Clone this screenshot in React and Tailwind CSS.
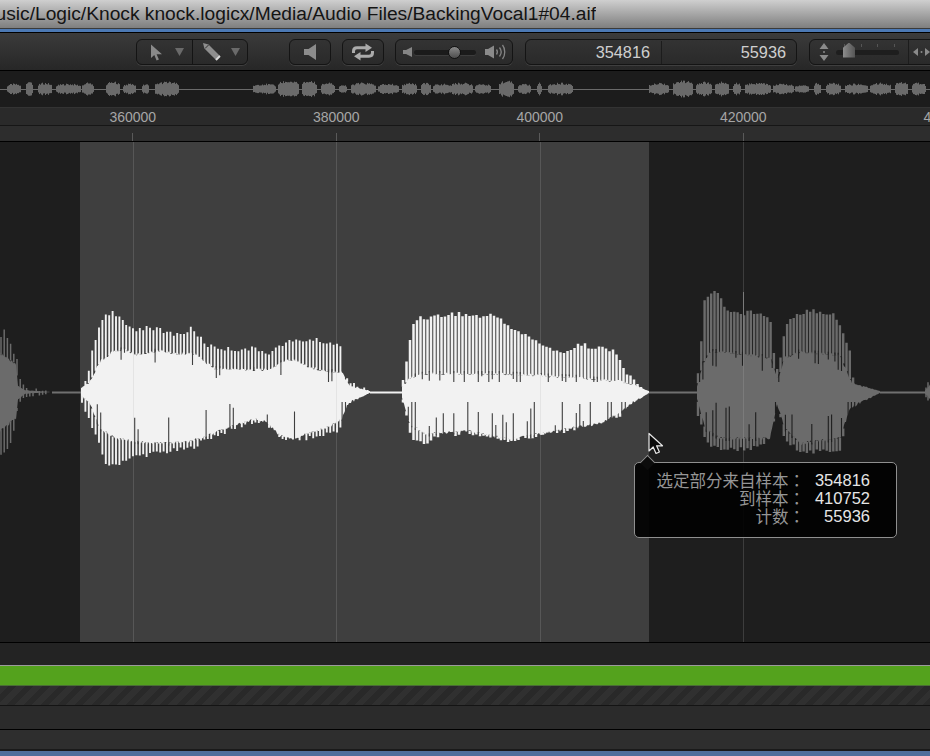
const rnd = (i) => {
  const v = Math.sin(i * 12.9898) * 43758.5453;
  return v - Math.floor(v);
};

const lerp = (pts, x) => {
  if (x <= pts[0][0]) return pts[0][1];
  for (let i = 1; i < pts.length; i++) {
    if (x <= pts[i][0]) {
      const [a, b] = pts[i - 1];
      const [c, d] = pts[i];
      return b + ((d - b) * (x - a)) / (c - a);
    }
  }
  return pts[pts.length - 1][1];
};

// envelopes are in page coordinates, the waveform centre is y=392
const waves = [
  {
    id: 0, from: 0, to: 52, fill: '#6b6b6b', bg: '#1e1e1e', step: 3.2, w: 1.5, cuts: 0.15, deep: 14,
    top: [[0, 335], [3, 327], [10, 340], [15, 355], [17, 356], [18, 375], [25, 385], [50, 391], [52, 391]],
    solidTop: [[0, 352], [16, 362], [18, 385], [25, 390], [52, 392]],
    solidBot: [[0, 432], [16, 420], [18, 400], [25, 394], [52, 392]],
    bot: [[0, 455], [5, 457], [13, 440], [16, 422], [18, 405], [25, 398], [50, 394], [52, 393]],
  },
  {
    id: 1, from: 81, to: 370, fill: '#f2f2f2', bg: '#3f3f3f', step: 3.4, w: 1.9, cuts: 0.14, deep: 26,
    top: [[81, 390], [88, 375], [93, 343], [100, 323], [105, 311], [113, 310], [125, 322], [135, 327], [150, 324], [165, 330], [180, 332], [192, 326], [200, 335], [208, 343], [230, 347], [250, 346], [270, 350], [285, 340], [310, 337], [330, 340], [342, 345], [344, 375], [350, 378], [360, 385], [370, 391]],
    solidTop: [[81, 388], [90, 380], [100, 360], [115, 349], [125, 348], [135, 353], [160, 349], [175, 352], [195, 352], [205, 360], [215, 367], [250, 368], [270, 368], [285, 359], [295, 358], [310, 366], [330, 370], [342, 370], [350, 385], [370, 391]],
    solidBot: [[81, 396], [90, 405], [100, 430], [115, 440], [130, 442], [150, 445], [165, 445], [190, 443], [200, 440], [220, 432], [240, 425], [255, 421], [265, 423], [280, 437], [292, 441], [305, 436], [330, 428], [342, 420], [348, 405], [370, 393]],
    bot: [[81, 400], [90, 425], [100, 450], [105, 465], [113, 469], [125, 462], [140, 458], [160, 455], [190, 451], [210, 440], [250, 425], [265, 425], [280, 440], [292, 442], [315, 440], [340, 432], [345, 405], [360, 395], [370, 392]],
  },
  {
    id: 2, from: 402, to: 649, fill: '#f2f2f2', bg: '#3f3f3f', step: 3.5, w: 2.5, cuts: 0.45, deep: 30,
    top: [[402, 385], [408, 350], [413, 320], [420, 315], [435, 314], [455, 311], [480, 314], [497, 313], [505, 320], [515, 328], [530, 335], [545, 343], [552, 349], [570, 348], [577, 342], [600, 345], [615, 350], [622, 357], [625, 370], [630, 375], [640, 383], [649, 391]],
    solidTop: [[402, 386], [410, 376], [425, 372], [500, 372], [540, 374], [580, 376], [620, 380], [630, 382], [649, 391]],
    solidBot: [[402, 398], [410, 425], [425, 436], [440, 434], [470, 433], [510, 441], [530, 437], [570, 430], [600, 425], [620, 414], [630, 406], [649, 393]],
    bot: [[402, 400], [408, 425], [413, 445], [425, 446], [440, 436], [470, 436], [510, 443], [530, 440], [570, 432], [600, 425], [622, 418], [626, 405], [649, 393]],
  },
  {
    id: 3, from: 697, to: 880, fill: '#6b6b6b', bg: '#1e1e1e', step: 3.3, w: 2.4, cuts: 0.45, deep: 30,
    top: [[697, 375], [700, 365], [703, 300], [712, 289], [720, 292], [727, 308], [740, 311], [760, 309], [770, 315], [775, 360], [778, 370], [785, 325], [790, 315], [810, 307], [835, 312], [843, 330], [850, 350], [852, 375], [860, 385], [875, 390], [880, 391]],
    solidTop: [[697, 385], [703, 362], [710, 350], [720, 350], [770, 356], [778, 378], [785, 356], [800, 350], [840, 354], [852, 382], [880, 391]],
    solidBot: [[697, 400], [705, 430], [720, 440], [770, 440], [777, 405], [785, 430], [800, 445], [840, 440], [850, 410], [880, 393]],
    bot: [[697, 415], [705, 440], [712, 450], [730, 452], [760, 450], [770, 440], [778, 405], [785, 445], [800, 452], [812, 455], [840, 452], [848, 415], [852, 400], [860, 395], [880, 392]],
  },
  {
    id: 4, from: 925, to: 930, fill: '#6b6b6b', bg: '#1e1e1e', step: 2, w: 1.5, cuts: 0, deep: 0,
    top: [[925, 388], [927, 380], [930, 378]],
    solidTop: [[925, 390], [930, 384]],
    solidBot: [[925, 394], [930, 400]],
    bot: [[925, 396], [927, 404], [930, 405]],
  },
];

const buildWave = (wave) => {
  let solid = '';
  let spikes = '';
  let cuts = '';
  const xs = [];
  for (let x = wave.from; x <= wave.to; x += 1) xs.push(x);
  // a little noise so the solid body has a rough edge
  const amp = (y) => Math.min(1, Math.abs(y - 392) / 12) * 3;
  solid += xs.map((x, n) => {
    const y = lerp(wave.solidTop, x);
    return `${n ? 'L' : 'M'}${x} ${(y + rnd(x + wave.id) * amp(y)).toFixed(1)}`;
  }).join('');
  solid += xs.slice().reverse().map((x) => {
    const y = lerp(wave.solidBot, x);
    return `L${x} ${(y - rnd(x * 3 + wave.id) * amp(y)).toFixed(1)}`;
  }).join('') + 'Z';
  let i = wave.id * 100;
  for (let x = wave.from + 1; x < wave.to; x += wave.step) {
    i += 1;
    const t = lerp(wave.top, x) + rnd(i) * 5;
    const st = lerp(wave.solidTop, x);
    const sb = lerp(wave.solidBot, x);
    const b = lerp(wave.bot, x) - rnd(i + 50) * 5;
    if (t < st) spikes += `M${x.toFixed(1)} ${t.toFixed(1)}V${(st + 2).toFixed(1)}`;
    if (b > sb) spikes += `M${x.toFixed(1)} ${(sb - 2).toFixed(1)}V${b.toFixed(1)}`;
    if (rnd(i + 7) < wave.cuts) {
      const cx = x + wave.step / 2;
      const cb = lerp(wave.solidBot, cx);
      if (cb - 392 > 14) cuts += `M${cx.toFixed(1)} ${(cb + 1).toFixed(1)}V${Math.max(402, cb - 6 - rnd(i + 9) * wave.deep).toFixed(1)}`;
    }
    if (rnd(i + 11) < wave.cuts) {
      const cx = x + wave.step / 2;
      const ct = lerp(wave.solidTop, cx);
      if (392 - ct > 14) cuts += `M${cx.toFixed(1)} ${(ct - 1).toFixed(1)}V${Math.min(382, ct + rnd(i + 13) * wave.deep * 0.6).toFixed(1)}`;
    }
  }
  return { ...wave, solid, spikes, cuts };
};

const builtWaves = waves.map(buildWave);

const overviewBlobs = [
  [7, 20, 5], [26, 32, 8], [38, 51, 6], [56, 80, 5], [82, 93, 6], [106, 119, 7], [123, 135, 5], [142, 148, 5], [155, 178, 7],
  [253, 275, 5], [278, 298, 8], [302, 316, 8], [321, 334, 6], [339, 346, 4], [351, 375, 6], [378, 398, 5], [402, 416, 6], [421, 430, 6],
  [433, 450, 5], [450, 472, 6], [475, 490, 5], [499, 513, 8], [518, 530, 5], [537, 541, 6], [548, 572, 6],
  [649, 668, 6], [673, 692, 8], [696, 711, 7], [715, 728, 7], [733, 740, 6], [745, 770, 6], [773, 793, 5], [795, 808, 4], [814, 820, 6], [826, 840, 6], [845, 867, 5], [870, 890, 6], [895, 907, 7], [912, 925, 6],
];

const overviewPath = overviewBlobs
  .map(([a, b, h], n) => {
    let d = '';
    for (let x = a; x <= b; x += 1) {
      const p = (x - a) / (b - a || 1);
      const shape = Math.pow(Math.sin(Math.PI * Math.min(1, p * 0.84 + 0.08)), 0.3);
      const hh = Math.max(1, h * shape * (0.72 + rnd(n * 40 + x) * 0.38));
      d += `M${x + 0.5} ${(18 - hh).toFixed(1)}V${(18 + hh).toFixed(1)}`;
    }
    return d;
  })
  .join('');

const gridX = [133, 336, 540, 743];

function Waveform() {
  return (
    <svg className="absolute inset-0 w-[930px] h-[500px]" viewBox="0 142 930 500" fill="none">
      {gridX.map((x) => (
        <path key={x} d={`M${x + 0.5} 142V642`} stroke={x < 648 ? '#575757' : '#3d3d3d'} />
      ))}
      <path d="M52 392.5H81M648 392.5H697M880 392.5H925" stroke="#707070" strokeWidth="2" />
      <path d="M370 392.5H402" stroke="#f2f2f2" strokeWidth="2" />
      {builtWaves.map((w) => (
        <g key={w.id}>
          <path d={w.solid} fill={w.fill} />
          <path d={w.spikes} stroke={w.fill} strokeWidth={w.w} />
          <path d={w.cuts} stroke={w.bg} strokeWidth="1.1" />
        </g>
      ))}
      <path d="M133.5 350V440M336.5 370V428M540.5 374V434" stroke="#e4e4e4" />
      <path d="M743.5 292V450" stroke="#7b7b7b" />
    </svg>
  );
}

function Cursor() {
  return (
    <svg className="absolute left-[646px] top-[290px] w-[20px] h-[26px]" viewBox="0 0 20 26">
      <path d="M3 1.5V19l4.2-4 2.8 6.5 3.4-1.5-2.8-6.2H16.5Z" fill="#0a0a0a" stroke="#e8e8e8" strokeWidth="1.2" strokeLinejoin="round" />
    </svg>
  );
}

const Colon = () => <span className="font-['Noto_Sans_CJK_TC',sans-serif]">：</span>;

const tipLabel = 'h-[18px] overflow-hidden text-[#969696]';
const tipValue = 'h-[18px] text-[#e6e6e6]';

function Tooltip() {
  return (
    <div className="absolute left-[634px] top-[320px] w-[263px] h-[76px] rounded-[5px] border border-[#8f8f8f] bg-black/90 pt-[8px] pr-[26px] text-[16.5px] leading-[18px]">
      <div className="absolute left-[7px] top-[-6px] w-[11px] h-[11px] rotate-45 border-l border-t border-[#8f8f8f] bg-[#0c0c0c]" />
      <div className="relative grid grid-cols-[1fr_65px] text-right whitespace-nowrap">
        <span className={tipLabel}>选定部分来自样本<Colon /></span>
        <span className={tipValue}>354816</span>
        <span className={tipLabel}>到样本<Colon /></span>
        <span className={tipValue}>410752</span>
        <span className={tipLabel}>计数<Colon /></span>
        <span className={tipValue}>55936</span>
      </div>
    </div>
  );
}

const Caret = () => (
  <svg width="9" height="8" viewBox="0 0 9 8"><path d="M0 0h9L4.5 8Z" fill="#6a6a6a" /></svg>
);

const ctrl = 'h-[26px] rounded-[6px] border border-[#141414] bg-gradient-to-b from-[#333333] to-[#2a2a2a] shadow-[0_1px_0_#3f3f3f] flex items-center shrink-0';

function Toolbar() {
  return (
    <div className="h-[37px] pl-[136px] pt-[6px] flex items-start bg-gradient-to-b from-[#3b3b3b] to-[#272727] overflow-hidden">
      <div className={`${ctrl} w-[112px]`}>
        <div className="w-[56px] h-full flex items-center pl-[13px] gap-[12px] border-r border-[#141414]">
          <svg width="13" height="17" viewBox="0 0 13 17"><path d="M1 0.5V14l3.3-3 2.3 5.5 2.3-1-2.3-5.2H12Z" fill="#8a8a8a" /></svg>
          <Caret />
        </div>
        <div className="flex-1 h-full flex items-center pl-[9px] gap-[9px]">
          <svg width="20" height="20" viewBox="0 0 20 20"><path d="M1 1 6.5 2.4 18 14l-4 4L2.4 6.5Z" fill="#8e8e8e" /><path d="M3 6.5 6.5 3" stroke="#2e2e2e" /><path d="M14 18 18 14" stroke="#dcdcdc" strokeWidth="1.8" /></svg>
          <Caret />
        </div>
      </div>
      <div className={`${ctrl} w-[42px] ml-[41px] justify-center`}>
        <svg width="13" height="16" viewBox="0 0 13 16"><path d="M0 5h4.5L12 0v16L4.5 11H0Z" fill="#8c8c8c" /></svg>
      </div>
      <div className={`${ctrl} w-[42px] ml-[11px] justify-center`}>
        <svg width="24" height="18" viewBox="0 0 24 18" fill="none"><path d="M2.5 10V8.2C2.5 6 4 4.8 6 4.8H15" stroke="#ababab" strokeWidth="3" /><path d="M14.5 0.5 21 4.8 14.5 9Z" fill="#ababab" /><path d="M21.5 8V9.8C21.5 12 20 13.2 18 13.2H9" stroke="#ababab" strokeWidth="3" /><path d="M9.5 17.5 3 13.2 9.5 9Z" fill="#ababab" /></svg>
      </div>
      <div className={`${ctrl} w-[118px] ml-[11px] pl-[7px]`}>
        <svg width="10" height="10" viewBox="0 0 10 10" className="shrink-0"><path d="M0 3h3L9 0v10L3 7H0Z" fill="#858585" /></svg>
        <div className="relative w-[62px] h-[5px] ml-[1px] rounded-full bg-[#1b1b1b] shadow-[0_1px_0_#3c3c3c] shrink-0">
          <div className="absolute left-[34px] top-[-4px] w-[13px] h-[13px] rounded-full border border-[#111111] bg-gradient-to-b from-[#8a8a8a] to-[#4e4e4e]" />
        </div>
        <svg width="22" height="16" viewBox="0 0 22 16" fill="none" className="ml-[9px] shrink-0"><path d="M0 5h3l6-3.5v13L3 11H0Z" fill="#8a8a8a" /><path d="M11.5 5.5c1 1.4 1 3.6 0 5M14.5 3.5c2 2.6 2 6.4 0 9M17.5 1c3 3.8 3 10.2 0 14" stroke="#858585" strokeWidth="1.3" /></svg>
      </div>
      <div className={`${ctrl} w-[272px] ml-[12px] text-[16.3px] pt-[1px] text-[#cfcfcf]`}>
        <div className="w-[136px] h-full flex items-center justify-end pr-[11px] border-r border-[#1c1c1c]">354816</div>
        <div className="flex-1 h-full flex items-center justify-end pr-[10px]">55936</div>
      </div>
      <div className={`${ctrl} w-[140px] ml-[12px] pl-[9px]`}>
        <svg width="10" height="18" viewBox="0 0 10 18" className="shrink-0"><path d="M5 0 9.5 6H.5ZM5 18 .5 12h9Z" fill="#8a8a8a" /><circle cx="5" cy="9" r="1" fill="#8a8a8a" /></svg>
        <div className="relative w-[63px] h-[5px] ml-[7px] rounded-full bg-[#1e1e1e] shrink-0">
          <div className="absolute left-[8px] right-[4px] top-[-6px] flex justify-between">
            {[0, 1, 2, 3].map((t) => (
              <div key={t} className="w-[1px] h-[3px] bg-[#555555]" />
            ))}
          </div>
          <div className="absolute left-[7px] top-[-7px] w-[12px] h-[15px] bg-gradient-to-r from-[#8d8d8d] to-[#555555] [clip-path:polygon(50%_0,100%_35%,100%_100%,0_100%,0_35%)]" />
        </div>
        <div className="ml-[9px] h-full border-l border-[#1c1c1c] pl-[4px] flex items-center">
          <svg width="18" height="10" viewBox="0 0 18 10"><path d="M0 5 5 1v8ZM12 1l5 4-5 4Z" fill="#8a8a8a" /><circle cx="8.5" cy="5" r="1" fill="#8a8a8a" /></svg>
        </div>
      </div>
    </div>
  );
}

export default function App() {
  return (
    <div className="w-[930px] h-[756px] overflow-hidden bg-[#222222] font-['Liberation_Sans','Noto_Sans_CJK_SC',sans-serif]">
      <div className="h-[28px] w-[930px] bg-gradient-to-b from-[#cfcfcf] to-[#7f7f7f] flex">
        <div className="w-[596px] h-full overflow-hidden flex justify-end items-center">
          <span className="shrink-0 whitespace-nowrap text-[19.2px] text-[#141414]">/Music/Logic/Knock knock.logicx/Media/Audio Files/BackingVocal1#04.aif</span>
        </div>
      </div>
      <div className="h-[1px] bg-[#3a3a3a]" />
      <div className="h-[3px] bg-[#4c79b4]" />
      <div className="h-[1px] bg-black" />
      <Toolbar />
      <div className="h-[1px] bg-black" />
      <div className="h-[36px] bg-[#1c1c1c]">
        <svg className="block w-[930px] h-[36px]" viewBox="0 0 930 36" fill="none">
          <path d="M0 18.5H930" stroke="#6a6a6a" />
          <path d={overviewPath} stroke="#6a6a6a" strokeWidth="1" />
        </svg>
      </div>
      <div className="h-[1px] bg-[#333333]" />
      <div className="h-[17px] bg-[#2a2a2a] flex pl-[31px] pt-[1px] overflow-hidden text-[14px] leading-[17px] text-[#a6a6a6]">
        {['360000', '380000', '400000', '420000', '440000'].map((n) => (
          <div key={n} className="w-[203.5px] shrink-0 text-center">{n}</div>
        ))}
      </div>
      <div className="h-[1px] bg-[#161616]" />
      <div className="h-[15px] bg-[#2d2d2d] flex items-end pl-[31px] overflow-hidden">
        {gridX.map((x) => (
          <div key={x} className="w-[203.5px] shrink-0 flex justify-center">
            <div className="w-[1px] h-[8px] bg-[#5a5a5a]" />
          </div>
        ))}
      </div>
      <div className="h-[1px] bg-black" />
      <div className="relative h-[500px] flex overflow-hidden">
        <div className="w-[80px] bg-[#1e1e1e]" />
        <div className="w-[569px] bg-[#3f3f3f]" />
        <div className="flex-1 bg-[#1e1e1e]" />
        <Waveform />
        <Tooltip />
        <Cursor />
      </div>
      <div className="h-[1px] bg-black" />
      <div className="h-[22px] bg-[#232323]" />
      <div className="h-[1px] bg-[#9b9b9b]" />
      <div className="h-[19px] bg-[#54a21d]" />
      <div className="h-[1px] bg-[#4a6e35]" />
      <div className="h-[19px] bg-[repeating-linear-gradient(135deg,#303030_0,#303030_6px,#292929_6px,#292929_12px)]" />
      <div className="h-[1px] bg-[#141414]" />
      <div className="h-[23px] bg-[#2b2b2b]" />
      <div className="h-[1px] bg-black" />
      <div className="h-[19px] bg-[#2e2e2e]" />
      <div className="h-[2px] bg-[#1a1a1a]" />
      <div className="h-[5px] bg-[#4f6f9c]" />
    </div>
  );
}
